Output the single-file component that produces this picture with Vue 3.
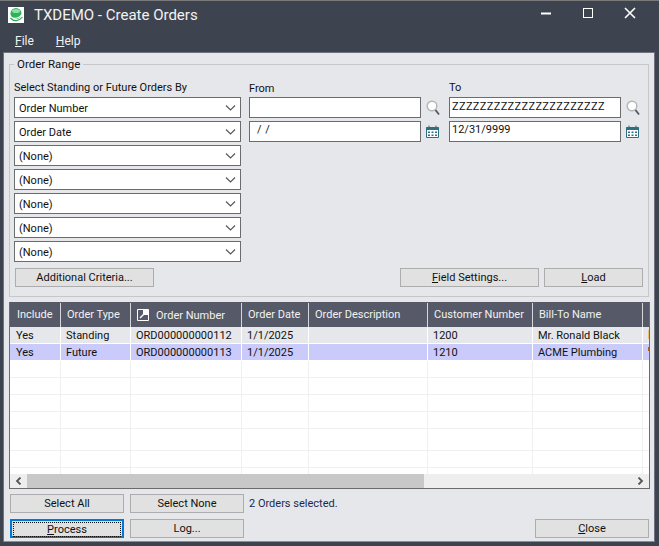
<template>
  <div class="window">
    <header class="titlebar">
      <svg class="logo" width="16" height="16" viewBox="0 0 16 16">
        <rect width="16" height="16" fill="#fff" />
        <circle cx="8" cy="6.5" r="5.5" fill="#2fb35a" />
        <ellipse cx="8" cy="4" rx="4" ry="2" fill="#8fe0a8" />
        <path d="M1.5 8.5C4 12.5 11 12.5 14.5 6.5" fill="none" stroke="#fff" stroke-width="1.2" />
        <path d="M2.5 11C6 15 11 14.5 14.5 10" fill="none" stroke="#2fa858" stroke-width="1.2" />
      </svg>
      <span class="title">TXDEMO - Create Orders</span>
      <div class="winbtns">
        <svg width="12" height="12" viewBox="0 0 12 12"><rect x="1" y="5.5" width="10" height="2" fill="#fff" /></svg>
        <svg width="12" height="12" viewBox="0 0 12 12"><rect x="1.5" y="1.5" width="9" height="9" fill="none" stroke="#fff" /></svg>
        <svg width="12" height="12" viewBox="0 0 12 12"><path d="M1 1L11 11M11 1L1 11" stroke="#fff" stroke-width="1.6" /></svg>
      </div>
    </header>
    <nav class="menubar">
      <span><u>F</u>ile</span>
      <span><u>H</u>elp</span>
    </nav>

    <main class="client">
      <fieldset class="range">
        <legend>Order Range</legend>
        <div class="range-fields">
          <div class="col-selects">
            <label class="lbl">Select Standing or Future Orders By</label>
            <div v-for="(opt, i) in selects" :key="i" class="select">
              <span>{{ opt }}</span>
              <svg width="11" height="6" viewBox="0 0 11 6"><path d="M1 .5L5.5 5L10 .5" fill="none" stroke="#555" stroke-width="1.1" /></svg>
            </div>
          </div>
          <div class="col-from">
            <label class="lbl lbl-from">From</label>
            <div class="input-row">
              <div class="input"></div>
              <svg class="ico" width="14" height="16" viewBox="0 0 14 16"><circle cx="6" cy="6" r="4.8" fill="#fff" stroke="#b4b4b4" stroke-width="1.4" /><path d="M9.5 10L13 14.5" stroke="#50555f" stroke-width="1.8" /></svg>
            </div>
            <div class="input-row">
              <div class="input date-empty">/ /</div>
              <svg class="ico" width="13" height="13" viewBox="0 0 13 13"><path d="M.5 2.5h12v10H.5z" fill="#fff" stroke="#2f6f80" /><path d="M.5 2h12v3H.5z" fill="#2f6f80" /><path d="M3 .5v3M10 .5v3" stroke="#2f6f80" /><path d="M2 6.5h2v1.5H2zM5.5 6.5h2v1.5h-2zM9 6.5h2v1.5H9zM2 9.5h2V11H2zM5.5 9.5h2V11h-2zM9 9.5h2V11H9z" fill="#2f6f80" /></svg>
            </div>
          </div>
          <div class="col-to">
            <label class="lbl">To</label>
            <div class="input-row">
              <div class="input zzz">ZZZZZZZZZZZZZZZZZZZZZZ</div>
              <svg class="ico" width="14" height="16" viewBox="0 0 14 16"><circle cx="6" cy="6" r="4.8" fill="#fff" stroke="#b4b4b4" stroke-width="1.4" /><path d="M9.5 10L13 14.5" stroke="#50555f" stroke-width="1.8" /></svg>
            </div>
            <div class="input-row">
              <div class="input date-end">12/31/9999</div>
              <svg class="ico" width="13" height="13" viewBox="0 0 13 13"><path d="M.5 2.5h12v10H.5z" fill="#fff" stroke="#2f6f80" /><path d="M.5 2h12v3H.5z" fill="#2f6f80" /><path d="M3 .5v3M10 .5v3" stroke="#2f6f80" /><path d="M2 6.5h2v1.5H2zM5.5 6.5h2v1.5h-2zM9 6.5h2v1.5H9zM2 9.5h2V11H2zM5.5 9.5h2V11h-2zM9 9.5h2V11H9z" fill="#2f6f80" /></svg>
            </div>
          </div>
        </div>
        <div class="range-actions">
          <button class="btn btn-criteria">Additional Criteria...</button>
          <button class="btn btn-settings"><u>F</u>ield Settings...</button>
          <button class="btn btn-load"><u>L</u>oad</button>
        </div>
      </fieldset>

      <section class="grid">
        <div class="grid-row grid-head">
          <div class="cell">Include</div>
          <div class="cell">Order Type</div>
          <div class="cell cell-num">
            <svg width="12" height="12" viewBox="0 0 12 12"><path d="M.5.5h11v11H.5z" fill="none" stroke="#fff" /><path d="M6 1h5v5H6z" fill="#fff" /><path d="M3 9l4-4" stroke="#fff" stroke-width="1.4" /></svg>
            <span>Order Number</span>
          </div>
          <div class="cell">Order Date</div>
          <div class="cell">Order Description</div>
          <div class="cell">Customer Number</div>
          <div class="cell">Bill-To Name</div>
          <div class="cell"></div>
        </div>
        <div class="rows">
          <div v-for="(row, i) in rows" :key="i" class="grid-row data-row" :class="row.cls">
            <div class="cell">{{ row.include }}</div>
            <div class="cell">{{ row.type }}</div>
            <div class="cell">{{ row.number }}</div>
            <div class="cell">{{ row.date }}</div>
            <div class="cell"></div>
            <div class="cell">{{ row.customer }}</div>
            <div class="cell">{{ row.name }}</div>
            <div class="cell"><i v-if="row.mark" class="mark" :class="row.mark"></i></div>
          </div>
        </div>
        <div class="hscroll">
          <div class="sb-btn">
            <svg width="7" height="8" viewBox="0 0 7 8"><path d="M5.5 .5L2 4l3.5 3.5" fill="none" stroke="#555" stroke-width="1.8" /></svg>
          </div>
          <div class="sb-thumb"></div>
          <div class="sb-track"></div>
          <div class="sb-btn">
            <svg width="7" height="8" viewBox="0 0 7 8"><path d="M1.5 .5L5 4L1.5 7.5" fill="none" stroke="#555" stroke-width="1.8" /></svg>
          </div>
        </div>
      </section>

      <div class="footer">
        <div class="footer-row">
          <button class="btn btn-foot">Select All</button>
          <button class="btn btn-foot">Select None</button>
          <span class="status">2 Orders selected.</span>
        </div>
        <div class="footer-row">
          <button class="btn btn-foot btn-default"><span class="focus"><u>P</u>rocess</span></button>
          <button class="btn btn-foot">Log...</button>
          <button class="btn btn-foot btn-close"><u>C</u>lose</button>
        </div>
      </div>
    </main>
  </div>
</template>

<script setup>
const selects = ["Order Number", "Order Date", "(None)", "(None)", "(None)", "(None)", "(None)"];

const filled = [
  { include: "Yes", type: "Standing", number: "ORD000000000112", date: "1/1/2025", customer: "1200", name: "Mr. Ronald Black", cls: "row-plain", mark: "mark-a" },
  { include: "Yes", type: "Future", number: "ORD000000000113", date: "1/1/2025", customer: "1210", name: "ACME Plumbing", cls: "row-selected", mark: "mark-b" },
];

// empty rows to fill the grid, the fifth one is taller in the original
const rows = [...filled, ...Array.from({ length: 7 }, (_, i) => ({ cls: i === 4 ? "row-tall" : "row-empty" }))];
</script>

<style>
html,
body {
  margin: 0;
  background: #3e4350;
}
</style>

<style scoped>
.window {
  width: 659px;
  height: 546px;
  box-sizing: border-box;
  background: #3e4350;
  border-top: 1px solid #7a7a7a;
  display: flex;
  flex-direction: column;
  font-family: Roboto, "Noto Sans", sans-serif;
  font-size: 11px;
  color: #111;
  overflow: hidden;
}

.titlebar {
  height: 30px;
  display: flex;
  align-items: center;
  padding: 0 0 2px 8px;
  box-sizing: border-box;
  color: #f2f2f2;
}

.logo {
  margin-right: 10px;
}

.title {
  font-size: 15px;
}

.winbtns {
  margin-left: auto;
  margin-right: 23px;
  display: flex;
  gap: 30px;
  align-self: flex-start;
  padding-top: 6px;
}

.menubar {
  height: 21px;
  display: flex;
  gap: 22px;
  padding-left: 15px;
  color: #f2f2f2;
  font-size: 12px;
  line-height: 20px;
}

.client {
  flex: 1;
  margin: 0 4px 4px 3px;
  background: #e6e7eb;
  border: 1px solid #6f7380;
  border-bottom-color: #8a8d96;
  padding: 3px 0 0 5px;
  box-sizing: border-box;
  display: flex;
  flex-direction: column;
}

button {
  font: inherit;
  color: inherit;
  padding: 0;
}

.range {
  margin: 0;
  padding: 0 0 0 4px;
  width: 640px;
  height: 241px;
  box-sizing: border-box;
  border: 1px solid #c6c7cb;
  min-inline-size: 0;
}

legend {
  margin-left: 0;
  padding: 0 3px;
  line-height: 16px;
  font-size: 11.5px;
}

.range-fields {
  display: flex;
  margin-top: 7px;
}

.lbl {
  display: block;
  height: 18px;
  line-height: 17px;
}

.lbl-from {
  line-height: 20px;
}

.col-selects {
  width: 235px;
}

.select {
  width: 227px;
  height: 21px;
  box-sizing: border-box;
  border: 1px solid #6c6c6c;
  background: #fff;
  margin-bottom: 3px;
  padding: 0 4px;
  display: flex;
  align-items: center;
  justify-content: space-between;
}

.select span {
  padding-top: 1px;
}

.col-from {
  width: 200px;
}

.input-row {
  display: flex;
  align-items: center;
  gap: 5px;
  margin-bottom: 3px;
}

.input {
  width: 172px;
  height: 21px;
  box-sizing: border-box;
  border: 1px solid #6c6c6c;
  background: #fff;
  padding: 0 2px;
  line-height: 17px;
  white-space: nowrap;
  overflow: hidden;
}

.zzz {
  letter-spacing: 0.36px;
}

.date-end {
  line-height: 15px;
}

.date-empty {
  padding-left: 7px;
  word-spacing: 1px;
  line-height: 15px;
}

.range-actions {
  display: flex;
  margin: 3px 0 0 1px;
}

.btn {
  height: 19px;
  box-sizing: border-box;
  border: 1px solid #adadad;
  background: #e1e1e1;
  line-height: 16px;
}

.btn-criteria {
  width: 139px;
}

.btn-settings {
  width: 139px;
  margin-left: 246px;
}

.btn-load {
  width: 99px;
  margin-left: 5px;
}

.grid {
  width: 641px;
  height: 187px;
  box-sizing: border-box;
  margin-top: 5px;
  border: 1px solid #6c6c6c;
  border-top-color: #565a68;
  background: #fff;
  display: flex;
  flex-direction: column;
  overflow: hidden;
}

.grid-row {
  display: grid;
  grid-template-columns: 51px 70px 111px 67px 119px 105px 110px 10px;
}

.grid-head {
  height: 24px;
  flex: none;
  background: #565a68;
  color: #f2f2f2;
}

.grid-head .cell {
  border-right: 1px solid #d6d7dc;
  line-height: 23px;
  padding-left: 6px;
  white-space: nowrap;
  overflow: hidden;
}

.grid-head .cell:first-child {
  padding-left: 7px;
}

.grid-head .cell-num {
  display: flex;
  align-items: center;
  gap: 7px;
  padding-left: 6px;
}

.grid-head .cell-num svg {
  flex: none;
}

.rows {
  flex: 1;
  overflow: hidden;
}

.data-row {
  height: 17px;
  box-sizing: border-box;
}

.data-row.row-tall {
  height: 22px;
}

.data-row .cell {
  border-right: 1px solid #f0f0f0;
  border-bottom: 1px solid #f0f0f0;
  padding-left: 5px;
  line-height: 18px;
  white-space: nowrap;
  overflow: hidden;
}

.data-row .cell:first-child {
  padding-left: 6px;
}

.row-plain .cell {
  background: #e6e7eb;
  border-color: #fff;
}

.row-selected .cell {
  background: #cbcbfb;
  border-color: #fff;
}

.mark {
  display: block;
  width: 2px;
  height: 9px;
  margin: 3px 0 0 0;
}

.mark-a {
  background: #e6c07a;
}

.mark-b {
  height: 4px;
  background: #a8641e;
}

.hscroll {
  height: 14px;
  flex: none;
  display: flex;
  background: #eee;
}

.sb-btn {
  width: 17px;
  display: flex;
  align-items: center;
  justify-content: center;
}

.sb-thumb {
  width: 397px;
  background: #c8c8c8;
}

.sb-track {
  flex: 1;
}

.footer {
  display: flex;
  flex-direction: column;
  gap: 6px;
  margin-top: 5px;
}

.footer-row {
  display: flex;
  align-items: center;
  gap: 6px;
  padding-left: 1px;
}

.btn-foot {
  width: 114px;
}

.status {
  margin-left: -1px;
  color: #1c2a50;
}

.btn-default {
  border: 2px solid #0078d7;
  padding: 1px;
}

.focus {
  display: block;
  height: 13px;
  line-height: 13px;
  border: 1px dotted #111;
}

.btn-close {
  margin-left: auto;
  margin-right: 5px;
}
</style>
